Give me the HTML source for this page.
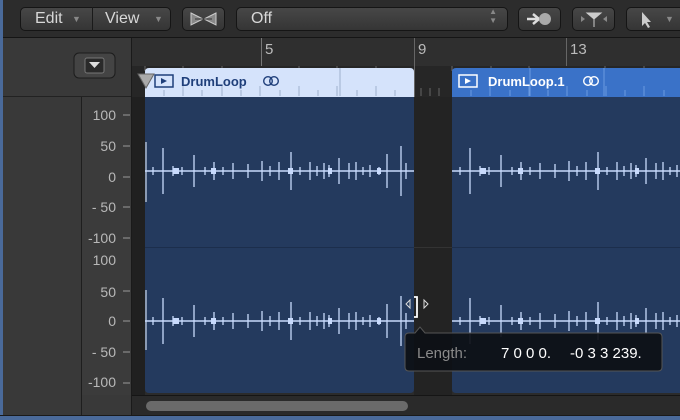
<!DOCTYPE html>
<html><head><style>
html,body{margin:0;padding:0;width:680px;height:420px;overflow:hidden;background:#2b2b2b;font-family:"Liberation Sans",sans-serif}
.btn{position:absolute;top:7px;height:24px;border:1px solid #151515;border-radius:5px;background:linear-gradient(#474747,#353535);box-sizing:border-box;color:#d8d8d8;font-size:16px;line-height:22px}
</style></head><body>
<svg width="680" height="420" style="position:absolute;left:0;top:0" font-family="Liberation Sans, sans-serif">
<rect x="0" y="0" width="680" height="38" fill="#2c2c2c"/>
<rect x="0" y="37" width="680" height="1" fill="#151515"/>
<rect x="0" y="38" width="132" height="382" fill="#393939"/>
<rect x="0" y="0" width="3" height="420" fill="#4a6a9a"/>
<rect x="3" y="96" width="129" height="1" fill="#222"/>
<rect x="81" y="97" width="1" height="318" fill="#1e1e1e"/>
<rect x="82" y="97" width="50" height="298" fill="#3b3b3b"/>
<rect x="131" y="38" width="1" height="377" fill="#1a1a1a"/>
<rect x="74" y="53" width="41" height="25" rx="5" fill="#444" stroke="#1c1c1c"/>
<rect x="85" y="58" width="19" height="15" rx="2" fill="#2a2a2a" stroke="#777"/>
<path d="M89 62 L100 62 L94.5 68 Z" fill="#ddd"/>
<rect x="132" y="38" width="548" height="28" fill="#2f2f2f"/>
<rect x="132" y="66" width="548" height="31" fill="#262626"/>
<line x1="261.5" y1="38" x2="261.5" y2="66" stroke="#777"/>
<line x1="414.5" y1="38" x2="414.5" y2="97" stroke="#666"/>
<line x1="566.5" y1="38" x2="566.5" y2="66" stroke="#666"/>
<text x="265" y="54" font-size="15" fill="#bbb">5</text>
<text x="418" y="54" font-size="15" fill="#bbb">9</text>
<text x="570" y="54" font-size="15" fill="#bbb">13</text>
<g stroke="#666">
<path d="M145 66v5M183 66v5M222 66v5M299 66v5M337 66v5M376 66v5M452 66v5M491 66v5M529 66v5M605 66v5M644 66v5M421 88v8M430 88v8M439 88v8"/>
</g>
<rect x="132" y="97" width="13" height="298" fill="#202020"/>
<rect x="414" y="97" width="38" height="298" fill="#232323"/>
<line x1="414" y1="247.5" x2="452" y2="247.5" stroke="#333"/>
<path d="M145 72 Q145 68 149 68 L410 68 Q414 68 414 72 L414 97 L145 97 Z" fill="#d5e3fb"/>
<g stroke="#9fb1cc"><path d="M183 86v10M222 86v10M260 86v10M299 86v10M337 86v10M376 86v10M164 90v6M202 90v6M241 90v6M280 90v6M318 90v6M357 90v6M395 90v6M340 68v28"/></g>
<rect x="155" y="75" width="18" height="12" fill="none" stroke="#1f3f7a" stroke-width="1.5"/>
<path d="M161 78 L167 81 L161 84 Z" fill="#1f3f7a"/>
<text x="181" y="86" font-size="13" font-weight="bold" fill="#1f3f7a">DrumLoop</text>
<circle cx="268" cy="81" r="4.3" fill="none" stroke="#1f3f7a" stroke-width="1.4"/><circle cx="274" cy="81" r="4.3" fill="none" stroke="#1f3f7a" stroke-width="1.4"/>
<path d="M138 74 L154 74 L146 88 Z" fill="#aaa" stroke="#666"/>
<path d="M452 72 Q452 68 456 68 L680 68 L680 97 L452 97 Z" fill="#3a72c8"/>
<g stroke="#6a9ae0"><path d="M490 86v10M529 86v10M567 86v10M606 86v10M644 86v10M471 90v6M510 90v6M548 90v6M587 90v6M625 90v6M664 90v6M530 68v28M604 68v28"/></g>
<rect x="459" y="75" width="18" height="12" fill="none" stroke="#fff" stroke-width="1.5"/>
<path d="M465 78 L471 81 L465 84 Z" fill="#fff"/>
<text x="488" y="86" font-size="13" font-weight="bold" fill="#fff">DrumLoop.1</text>
<circle cx="588" cy="81" r="4.3" fill="none" stroke="#fff" stroke-width="1.4"/><circle cx="594" cy="81" r="4.3" fill="none" stroke="#fff" stroke-width="1.4"/>
<path d="M145 97 L414 97 L414 389 Q414 393 410 393 L149 393 Q145 393 145 389 Z" fill="#243a5e"/>
<path d="M452 97 L680 97 L680 393 L456 393 Q452 393 452 389 Z" fill="#243a5e"/>
<line x1="145" y1="247.5" x2="414" y2="247.5" stroke="#1c2e4c"/>
<line x1="452" y1="247.5" x2="680" y2="247.5" stroke="#1c2e4c"/>
<rect x="145" y="142" width="2" height="60" fill="#8a9ab3"/>
<rect x="145" y="290" width="2" height="60" fill="#8a9ab3"/>
<defs>
<g id="wf" stroke="#c8dafc" stroke-width="1.3">
<line x1="0" y1="0" x2="269" y2="0" stroke-width="1.6"/>
<path d="M18 -23v46M49 -16v32M69 -9v18M88 -8v16M103 -7v14M117 -10v20M134 -9v18M146 -19v38M165 -9v18M179 -8v16M184 -6v12M194 -13v26M204 -8v16M211 -9v18M225 -6v12M242 -17v34M256 -25v50M261 -8v16M8 -4v8M28 -5v10M37 -4v8M60 -4v8M78 -4v8M125 -5v10M155 -4v8M172 -5v10M218 -4v8M234 -4v8"/>
<path d="M28 -3h6v6h-6zM66 -3h5v6h-5zM143 -3h5v6h-5zM183 -3h4v6h-4zM232 -3h4v6h-4z" fill="#c8dafc" stroke="none"/>
</g>
</defs>
<use href="#wf" x="145" y="171"/>
<use href="#wf" x="145" y="321"/>
<use href="#wf" x="452" y="171"/>
<use href="#wf" x="452" y="321"/>
<g font-size="14" fill="#b8b8b8" text-anchor="end">
<text x="116" y="120">100</text><text x="116" y="151">50</text><text x="116" y="182">0</text><text x="116" y="212">- 50</text><text x="116" y="243">-100</text>
<text x="116" y="265">100</text><text x="116" y="297">50</text><text x="116" y="326">0</text><text x="116" y="357">- 50</text><text x="116" y="387">-100</text>
</g>
<g stroke="#999"><path d="M123 115h7M123 146h7M123 177h7M123 207h7M123 238h7M123 291h7M123 321h7M123 352h7M123 383h7"/></g>
<rect x="132" y="395" width="548" height="20" fill="#2a2a2a"/>
<line x1="132" y1="395.5" x2="680" y2="395.5" stroke="#151515"/>
<rect x="146" y="401" width="262" height="10" rx="5" fill="#6a6a6a"/>
<rect x="0" y="415" width="680" height="5" fill="#4a6a9a"/>
<rect x="0" y="415" width="680" height="1" fill="#1a1a1a"/>
<path d="M414 297 h3 v20 h-3" fill="none" stroke="#fff" stroke-width="1.8"/>
<path d="M410 300 L406 304 L410 308 Z M424 300 L428 304 L424 308 Z" fill="none" stroke="#ddd"/>
<path d="M409 333 L415 333 L420 327 L425 333 L658 333 Q662 333 662 337 L662 367 Q662 371 658 371 L409 371 Q405 371 405 367 L405 337 Q405 333 409 333 Z" fill="#0d1016" fill-opacity="0.93" stroke="#555"/>
<text x="417" y="358" font-size="15" fill="#8a8a8a">Length:</text>
<text x="501" y="358" font-size="15" fill="#fff">7 0 0 0.</text>
<text x="570" y="358" font-size="15" fill="#fff">-0 3 3 239.</text>
</svg>
<div class="btn" style="left:20px;width:151px;"><span style="position:absolute;left:14px">Edit</span><span style="position:absolute;left:51px;font-size:9px;color:#888">▼</span><span style="position:absolute;left:71px;top:-1px;width:1px;height:24px;background:#1a1a1a"></span><span style="position:absolute;left:84px">View</span><span style="position:absolute;left:133px;font-size:9px;color:#888">▼</span></div>
<div class="btn" style="left:182px;width:43px;"><svg width="41" height="22" style="position:absolute;left:0;top:0"><path d="M8 5 L20 11 L8 17 Z M33 5 L21 11 L33 17 Z" fill="#888" stroke="#ccc"/><path d="M12 11h17" stroke="#333"/></svg></div>
<div class="btn" style="left:236px;width:272px;"><span style="position:absolute;left:14px">Off</span><span style="position:absolute;right:10px;top:-1px;font-size:8px;line-height:9px;color:#888">▲<br>▼</span></div>
<div class="btn" style="left:518px;width:43px;"><svg width="41" height="22" style="position:absolute;left:0;top:0"><path d="M8 11h10M14 6l6 5-6 5" stroke="#ddd" stroke-width="2.5" fill="none"/><circle cx="26" cy="11" r="6" fill="#aaa"/></svg></div>
<div class="btn" style="left:572px;width:43px;"><svg width="41" height="22" style="position:absolute;left:0;top:0"><path d="M14 5h14l-7 6z M21 10v9" fill="#ccc" stroke="#ccc"/><path d="M8 8l4 3-4 3zM34 8l-4 3 4 3z" fill="#888"/></svg></div>
<div class="btn" style="left:626px;width:70px;"><svg width="30" height="22" style="position:absolute;left:10px;top:0"><path d="M5 4 L5 18 L8 15 L11 20 L13 19 L10 14 L14 14 Z" fill="#ccc"/></svg><span style="position:absolute;left:38px;font-size:9px;color:#888">▼</span></div>
</body></html>
